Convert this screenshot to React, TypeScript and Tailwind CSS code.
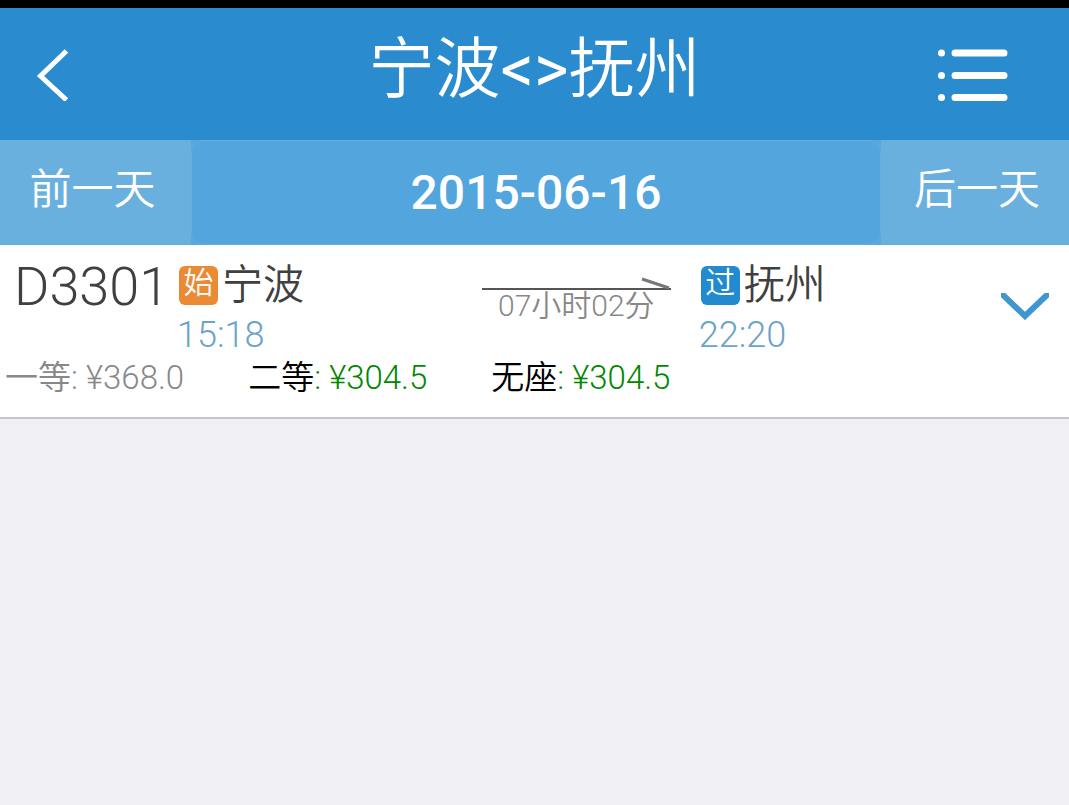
import React from "react";

type Fare = { seat: string; price: string; available: boolean };

const fares: Fare[] = [
  { seat: "一等", price: "¥368.0", available: false },
  { seat: "二等", price: "¥304.5", available: true },
  { seat: "无座", price: "¥304.5", available: true },
];

function Station({ tag, tagClass, name, time }: { tag: string; tagClass: string; name: string; time: string }) {
  return (
    <div>
      <div className="flex items-center gap-1 pl-0.5">
        <span className={`flex size-[39px] items-start justify-center rounded-md text-[30px] leading-[34px] text-white ${tagClass}`}>
          {tag}
        </span>
        <span className="text-[41px] leading-[50px] text-[#404040]">{name}</span>
      </div>
      <time className="block text-[36px] leading-[50px] text-[#6ba3c9]">{time}</time>
    </div>
  );
}

function FareItem({ seat, price, available }: Fare) {
  return (
    <li className={available ? "text-[#008800]" : "text-[#888888]"}>
      <span className={available ? "text-black" : ""}>{seat}</span>: {price}
    </li>
  );
}

export default function App() {
  return (
    <div className="min-h-screen bg-[#efeff4] font-['Roboto','Noto_Sans_CJK_SC',sans-serif] font-[350]" lang="zh-CN">
      <header className="border-t-8 border-black bg-[#2a8bcf] text-white">
        <div className="grid h-[132px] grid-cols-[1fr_auto_1fr] items-center pl-9 pr-[61px]">
          <button type="button" aria-label="返回" className="justify-self-start">
            <svg viewBox="0 0 34 54" className="h-[54px] w-[34px]" fill="none" stroke="currentColor" strokeWidth="5">
              <path d="M30.500 4 4.500 29 30.500 53" />
            </svg>
          </button>
          <h1 className="pb-2 pl-[25px] text-[66px] leading-[76px]">
            宁波<span className="font-normal">&lt;&gt;</span>抚州
          </h1>
          <button type="button" aria-label="菜单" className="justify-self-end">
            <svg viewBox="0 0 70 54" className="h-[54px] w-[70px]" fill="none" stroke="currentColor" strokeWidth="7" strokeLinecap="round">
              <path d="M3.500 6h.01M3.500 28.500h.01M3.500 50.500h.01M17 6h49M17 28.500h49M17 50.500h49" />
            </svg>
          </button>
        </div>
      </header>

      <nav className="flex h-[105px] bg-[#6ab0df] text-[42px] text-white">
        <button type="button" className="w-[191px] pb-1.5 pr-1.5">前一天</button>
        <div className="flex flex-1 bg-[#5ca6d9]">
          <button type="button" className="flex-1 rounded-xl border border-[#62afe2] bg-[#52a5dd] text-[48px] font-medium">2015-06-16</button>
        </div>
        <button type="button" className="w-[188px] pb-1.5 pl-1">后一天</button>
      </nav>

      <main>
        <article className="border-b-2 border-[#c8c8cc] bg-white pb-[21px] pt-[15px]">
          <div className="grid grid-cols-[163px_12fr_189px_13fr_48px] pl-3.5 pr-5">
            <h2 className="text-[54px] leading-[54px] text-[#404040]">D3301</h2>
            <Station tag="始" tagClass="bg-[#ea8a35]" name="宁波" time="15:18" />
            <div className="pt-4 text-center">
              <svg viewBox="0 0 189 14" className="block h-[14px] w-full" fill="none" stroke="#555555" strokeWidth="2">
                <path d="M0 13H189" />
                <path d="M160 3 187 12" stroke="#777777" strokeWidth="3" />
              </svg>
              <span className="block text-[30px] leading-8 text-[#888888]">07小时02分</span>
            </div>
            <div className="pl-7">
              <Station tag="过" tagClass="bg-[#228bd0]" name="抚州" time="22:20" />
            </div>
            <button type="button" aria-label="展开" className="flex pt-[33px]">
              <svg viewBox="0 0 48 27" className="h-[27px] w-12" fill="none" stroke="#3f97d0" strokeWidth="6">
                <path d="M0 0 24 23 48 0" />
              </svg>
            </button>
          </div>
          <ul className="flex gap-16 pl-[5px] text-[33px] leading-9">
            {fares.map((fare) => (
              <FareItem key={fare.seat} {...fare} />
            ))}
          </ul>
        </article>
      </main>
    </div>
  );
}
